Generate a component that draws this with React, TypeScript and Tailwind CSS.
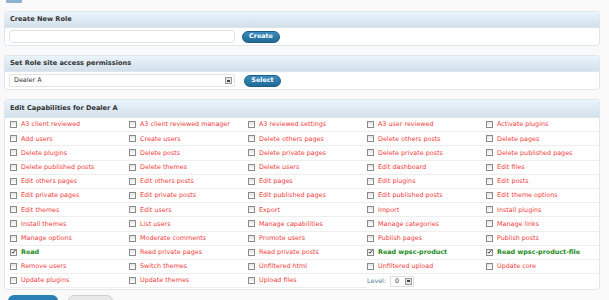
const caps: [string, boolean][] = [
  ['A3 client reviewed', false], ['A3 client reviewed manager', false], ['A3 reviewed settings', false], ['A3 user reviewed', false], ['Activate plugins', false],
  ['Add users', false], ['Create users', false], ['Delete others pages', false], ['Delete others posts', false], ['Delete pages', false],
  ['Delete plugins', false], ['Delete posts', false], ['Delete private pages', false], ['Delete private posts', false], ['Delete published pages', false],
  ['Delete published posts', false], ['Delete themes', false], ['Delete users', false], ['Edit dashboard', false], ['Edit files', false],
  ['Edit others pages', false], ['Edit others posts', false], ['Edit pages', false], ['Edit plugins', false], ['Edit posts', false],
  ['Edit private pages', false], ['Edit private posts', false], ['Edit published pages', false], ['Edit published posts', false], ['Edit theme options', false],
  ['Edit themes', false], ['Edit users', false], ['Export', false], ['Import', false], ['Install plugins', false],
  ['Install themes', false], ['List users', false], ['Manage capabilities', false], ['Manage categories', false], ['Manage links', false],
  ['Manage options', false], ['Moderate comments', false], ['Promote users', false], ['Publish pages', false], ['Publish posts', false],
  ['Read', true], ['Read private pages', false], ['Read private posts', false], ['Read wpsc-product', true], ['Read wpsc-product-file', true],
  ['Remove users', false], ['Switch themes', false], ['Unfiltered html', false], ['Unfiltered upload', false], ['Update core', false],
  ['Update plugins', false], ['Update themes', false], ['Upload files', false],
]

function Check({ on }: { on: boolean }) {
  return (
    <span className="w-[7px] h-[7px] border border-[#8a8a8a] bg-gradient-to-b from-[#e4e4e4] to-white shrink-0 flex items-center justify-center">
      {on && (
        <svg viewBox="0 0 8 8" className="w-[6px] h-[6px]">
          <path d="M1 4 L3 6 L7 1" stroke="#222" strokeWidth="1.4" fill="none" />
        </svg>
      )}
    </span>
  )
}

function PanelHead({ title, tall }: { title: string; tall?: boolean }) {
  return (
    <div className={`${tall ? 'h-[18px]' : 'h-[16px]'} bg-gradient-to-b from-[#eaf4fc] to-[#d3e0ea] border-b border-[#dbe6ee] rounded-t-[3px] flex items-center px-[5px] font-bold text-[#333] text-[6.6px]`}>
      {title}
    </div>
  )
}

function BlueBtn({ label, w }: { label: string; w: string }) {
  return (
    <button className={`${w} h-[12px] rounded-full bg-gradient-to-b from-[#3a8cbf] to-[#1f6a96] border border-[#1c5f86] text-white font-bold text-[6.4px] flex items-center justify-center`}>
      {label}
    </button>
  )
}

function Arrow() {
  return (
    <span className="w-[7px] h-[7px] border border-[#999] bg-[#e6e6e6] flex items-center justify-center">
      <span className="w-[3px] h-[2px] bg-[#444]" />
    </span>
  )
}

export default function App() {
  return (
    <div className="w-[609px] h-[300px] overflow-hidden bg-[#f9f9f9] font-['DejaVu_Sans',sans-serif] text-[6.4px] leading-none">
      {/* page icon, cut off at the top */}
      <div className="h-[11px] pl-[6px]">
        <span className="block w-[16px] h-[3px] bg-[#8fb2cc] rounded-b-[1px]" />
      </div>

      <div className="flex flex-col gap-[9px] pl-[4px] pr-[9px]">
        {/* Create role */}
        <div className="border border-[#e0e6eb] rounded-[3px] bg-white">
          <PanelHead title="Create New Role" />
          <div className="h-[17px] flex items-center gap-[7px] px-[4px]">
            <div className="w-[226px] h-[13px] border border-[#e3e3e3] rounded-[3px] bg-white" />
            <BlueBtn label="Create" w="w-[38px]" />
          </div>
        </div>

        {/* Role access */}
        <div className="border border-[#e0e6eb] rounded-[3px] bg-white">
          <PanelHead title="Set Role site access permissions" />
          <div className="h-[17px] flex items-center gap-[9px] px-[4px]">
            <div className="w-[226px] h-[13px] border border-[#e3e3e3] rounded-[2px] bg-white flex items-center justify-between pl-[4px] pr-[2px] text-[#333]">
              <span>Dealer A</span>
              <Arrow />
            </div>
            <BlueBtn label="Select" w="w-[37px]" />
          </div>
        </div>

        {/* Capabilities */}
        <div className="border border-[#e0e6eb] rounded-[3px] bg-white overflow-hidden">
          <PanelHead title="Edit Capabilities for Dealer A" tall />
          <div className="grid grid-cols-[repeat(5,119px)] pl-[5px] pb-[1px]">
            {caps.map(([name, on]) => (
              <div key={name} className="h-[14.2px] border-b border-[#eeeeee] flex items-center gap-[4px]">
                <Check on={on} />
                <span className={on ? 'text-[#1a8a1a] font-bold' : 'text-[#f03c3c]'}>{name}</span>
              </div>
            ))}
            <div className="h-[14.2px] flex items-center gap-[4px] text-[#5a7a94]">
              <span>Level:</span>
              <span className="w-[24px] h-[11px] border border-[#e0e0e0] bg-white flex items-center justify-between pl-[4px] pr-[1px] text-[#333]">
                0
                <Arrow />
              </span>
            </div>
          </div>
        </div>

        <div className="flex gap-[10px] pl-[4px] -mt-[4px]">
          <span className="w-[50px] h-[12px] rounded-full bg-[#2a80b5]" />
          <span className="w-[45px] h-[12px] rounded-full bg-[#e8e8e8] border border-[#cfcfcf]" />
        </div>
      </div>
    </div>
  )
}
